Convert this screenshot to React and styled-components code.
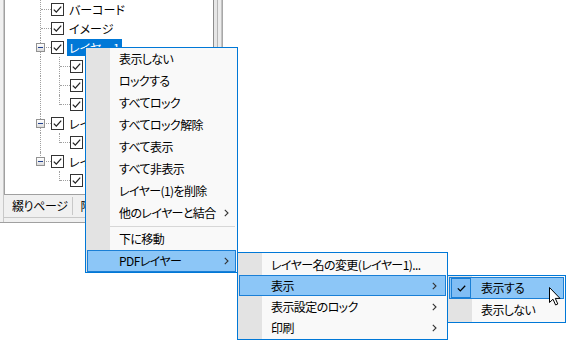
import React from "react"
import styled, { createGlobalStyle } from "styled-components"

const GlobalStyle = createGlobalStyle`
  html, body {
    margin: 0;
    padding: 0;
    background: #fff;
  }

  body {
    font: 12px "Noto Sans CJK JP", "Noto Sans", sans-serif;
    font-feature-settings: "palt";
    color: #000;
  }
`

const Screen = styled.div`
  position: relative;
  width: 569px;
  height: 340px;
  overflow: hidden;
  background: #fff;
`

// ---- left window with the layer tree ----

const Window = styled.div`
  width: 223px;
  height: 223px;
  display: flex;
  background: #f0f0f0;
  box-sizing: border-box;
  border-bottom: 1px solid #a0a0a0;
`

const LeftFrame = styled.div`
  width: 4px;
  background: #f0f0f0;
  border-right: 1px solid #c8c8c8;
  box-sizing: border-box;
`

const Body = styled.div`
  flex: 1;
  display: flex;
  flex-direction: column;
`

const TreeBox = styled.div`
  height: 195px;
  box-sizing: border-box;
  background: #fff;
  border-left: 1px solid #a0a0a0;
  border-bottom: 1px solid #a0a0a0;
  overflow: hidden;
`

const Row = styled.div`
  height: 19px;
  display: flex;
  align-items: center;
  padding-left: 25px;
`

const Guide = styled.span`
  position: relative;
  width: 19px;
  height: 19px;
  flex: none;

  &::before {
    content: "";
    position: absolute;
    left: 10px;
    top: 0;
    bottom: 0;
    border-left: 1px dotted #a0a0a0;
    display: ${p => (p.$on ? "block" : "none")};
  }
`

const Branch = styled.span`
  position: relative;
  width: 21px;
  height: 19px;
  flex: none;

  &::before {
    content: "";
    position: absolute;
    left: 10px;
    top: 0;
    height: ${p => (p.$last ? "10px" : "19px")};
    border-left: 1px dotted #a0a0a0;
  }

  &::after {
    content: "";
    position: absolute;
    left: 11px;
    right: 0;
    top: 9px;
    border-top: 1px dotted #a0a0a0;
  }
`

const Expander = styled.span`
  position: absolute;
  left: 6px;
  top: 5px;
  width: 9px;
  height: 9px;
  box-sizing: border-box;
  border: 1px solid #929292;
  background: linear-gradient(#fff, #dcdcdc);
  z-index: 1;

  &::after {
    content: "";
    position: absolute;
    left: 1px;
    top: 3px;
    width: 5px;
    height: 1px;
    background: #23428f;
  }
`

const Label = styled.span`
  margin-left: 3px;
  padding: 0 2px;
  height: 17px;
  line-height: 17px;
  white-space: nowrap;
  background: ${p => (p.$selected ? "#0078d7" : "transparent")};
  color: ${p => (p.$selected ? "#fff" : "#000")};
`

const Tabs = styled.div`
  height: 22px;
  display: flex;
  align-items: center;
  border-bottom: 1px solid #c8c8c8;
`

const Tab = styled.span`
  height: 18px;
  line-height: 18px;
  padding: 0 4px 0 8px;
  border-right: 1px solid #c8c8c8;
  white-space: nowrap;
  letter-spacing: -0.4px;
`

const RightBar = styled.div`
  width: 10px;
  box-sizing: border-box;
  border-left: 1px solid #8c8c8c;
  border-right: 1px solid #a8a8a8;
  background: linear-gradient(90deg, #e6e6e6 0 3px, #b4b4b4 3px 4px, #ececec 4px 7px, #c4c4c4 7px);
`

// ---- popup menus ----

const Menu = styled.div`
  position: absolute;
  left: ${p => p.$x}px;
  top: ${p => p.$y}px;
  width: ${p => p.$w}px;
  box-sizing: border-box;
  padding: ${p => p.$pad}px 1px;
  border: 1px solid #0078d7;
  background: linear-gradient(90deg, #e3e3e3 0 24px, #f9f9f9 24px);
  z-index: 2;
`

const Item = styled.div`
  height: ${p => p.$h || 22}px;
  box-sizing: border-box;
  display: grid;
  grid-template-columns: 23px minmax(0, 1fr) 20px;
  align-items: center;
  border: 1px solid ${p => (p.$active ? "#1a7fd6" : "transparent")};
  background: ${p => (p.$active ? "#8cc6f7" : "transparent")};
  white-space: nowrap;
`

const Icon = styled.span`
  height: 100%;
  display: flex;
  align-items: center;
  justify-content: center;
`

const CheckBox = styled.span`
  width: 20px;
  height: 20px;
  box-sizing: border-box;
  margin-left: -1px;
  display: flex;
  align-items: center;
  justify-content: center;
  border: 1px solid #1a7fd6;
  background: #80bdf4;
`

const Text = styled.span`
  padding-left: 8px;
  line-height: 1;
  letter-spacing: -0.6px;
`

const Arrow = styled.span`
  display: flex;
  justify-content: flex-end;
  padding-right: ${p => p.$gap || 8}px;
`

const Separator = styled.div`
  height: 1px;
  margin: 2px 1px 1px 23px;
  background: #d7d7d7;
`

const Pointer = styled.svg`
  position: absolute;
  left: 549px;
  top: 287px;
  z-index: 3;
`

function Check() {
  return (
    <svg width="13" height="13" viewBox="0 0 13 13">
      <rect x="0.5" y="0.5" width="12" height="12" fill="#fff" stroke="#333" />
      <path d="M2.8 6.6 L5.3 9.1 L10.2 3.6" fill="none" stroke="#222" strokeWidth="1.3" />
    </svg>
  )
}

function Chevron() {
  return (
    <svg width="5" height="8" viewBox="0 0 5 8">
      <path d="M0.8 0.8 L4 4 L0.8 7.2" fill="none" stroke="#333" strokeWidth="1.1" />
    </svg>
  )
}

// child rows sit under the popup menu, so their labels are left empty
const tree = [
  { level: 0, label: "バーコード" },
  { level: 0, label: "イメージ" },
  { level: 0, label: "レイヤー1", open: true, selected: true },
  { level: 1, guide: true },
  { level: 1, guide: true },
  { level: 1, guide: true, last: true },
  { level: 0, label: "レイヤー2", open: true },
  { level: 1, guide: true, last: true },
  { level: 0, label: "レイヤー3", open: true, last: true },
  { level: 1, last: true },
]

const mainItems = [
  "表示しない",
  "ロックする",
  "すべてロック",
  "すべてロック解除",
  "すべて表示",
  "すべて非表示",
  "レイヤー(1)を削除",
]

export default function App() {
  return (
    <Screen>
      <GlobalStyle />

      <Window>
        <LeftFrame />
        <Body>
          <TreeBox>
            {tree.map((n, i) => (
              <Row key={i}>
                {n.level === 1 && <Guide $on={n.guide} />}
                <Branch $last={n.last}>{n.open && <Expander />}</Branch>
                <Check />
                {n.label && <Label $selected={n.selected}>{n.label}</Label>}
              </Row>
            ))}
          </TreeBox>
          <Tabs>
            <Tab>綴りページ</Tab>
            <Tab>階層</Tab>
          </Tabs>
        </Body>
        <RightBar />
      </Window>

      <Menu $x={85} $y={47} $w={153} $pad={0}>
        {mainItems.map(t => (
          <Item key={t}>
            <Icon />
            <Text>{t}</Text>
          </Item>
        ))}
        <Item>
          <Icon />
          <Text>他のレイヤーと結合</Text>
          <Arrow $gap={6}><Chevron /></Arrow>
        </Item>
        <Separator />
        <Item>
          <Icon />
          <Text>下に移動</Text>
        </Item>
        <Item $active>
          <Icon />
          <Text>PDFレイヤー</Text>
          <Arrow $gap={6}><Chevron /></Arrow>
        </Item>
      </Menu>

      <Menu $x={237} $y={252} $w={211} $pad={1}>
        <Item $h={21}>
          <Icon />
          <Text>レイヤー名の変更(レイヤー1)...</Text>
        </Item>
        <Item $h={21} $active>
          <Icon />
          <Text>表示</Text>
          <Arrow $gap={8}><Chevron /></Arrow>
        </Item>
        <Item $h={21}>
          <Icon />
          <Text>表示設定のロック</Text>
          <Arrow $gap={8}><Chevron /></Arrow>
        </Item>
        <Item $h={21}>
          <Icon />
          <Text>印刷</Text>
          <Arrow $gap={8}><Chevron /></Arrow>
        </Item>
      </Menu>

      <Menu $x={447} $y={275} $w={119} $pad={1}>
        <Item $active>
          <Icon>
            <CheckBox>
              <svg width="9" height="7" viewBox="0 0 9 7">
                <path d="M0.8 3.4 L3.3 5.9 L8.2 0.8" fill="none" stroke="#000" strokeWidth="1.3" />
              </svg>
            </CheckBox>
          </Icon>
          <Text>表示する</Text>
        </Item>
        <Item>
          <Icon />
          <Text>表示しない</Text>
        </Item>
      </Menu>

      <Pointer width="12" height="19" viewBox="0 0 12 19">
        <path
          d="M0.5 0.5 L0.5 15.5 L4 12.2 L6.6 18 L8.8 17 L6.3 11.4 L11 11.4 Z"
          fill="#fff"
          stroke="#000"
          strokeWidth="1"
          strokeLinejoin="round"
        />
      </Pointer>
    </Screen>
  )
}
